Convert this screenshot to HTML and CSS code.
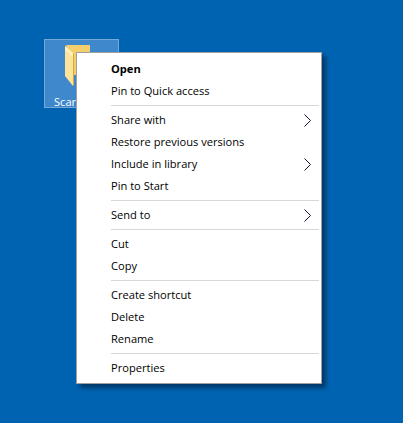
FILE: index.html
```html
<!DOCTYPE html>
<html>
<head>
    <title>Desktop</title>
    <meta charset="utf-8">
    <link rel="stylesheet" href="styles.css">
</head>
<body>
    <div class="desktop">
        <div class="icon">
            <svg class="folder" width="26" height="41" viewBox="0 0 26 41">
                <path d="M1 0H25V30H9Z" fill="#f3cf6e"/>
                <path d="M0 1L8 8V41L0 31Z" fill="#fbe39c"/>
                <path d="M0 1L8 8V12L0 5Z" fill="#fff0bd"/>
                <path d="M8 8L9 9V40L8 41Z" fill="#d9a93f"/>
            </svg>
            <span class="label">Scarlet</span>
        </div>
        <div class="menu">
            <div class="item bold">Open</div>
            <div class="item">Pin to Quick access</div>
            <div class="sep"></div>
            <div class="item">Share with
                <svg class="arrow" width="8" height="13" viewBox="0 0 8 13"><path d="M.5 .5L6.5 6.5L.5 12.5" fill="none" stroke="#1c0f3c"/></svg>
            </div>
            <div class="item">Restore previous versions</div>
            <div class="item">Include in library
                <svg class="arrow" width="8" height="13" viewBox="0 0 8 13"><path d="M.5 .5L6.5 6.5L.5 12.5" fill="none" stroke="#1c0f3c"/></svg>
            </div>
            <div class="item">Pin to Start</div>
            <div class="sep"></div>
            <div class="item">Send to
                <svg class="arrow" width="8" height="13" viewBox="0 0 8 13"><path d="M.5 .5L6.5 6.5L.5 12.5" fill="none" stroke="#1c0f3c"/></svg>
            </div>
            <div class="sep"></div>
            <div class="item">Cut</div>
            <div class="item">Copy</div>
            <div class="sep"></div>
            <div class="item">Create shortcut</div>
            <div class="item">Delete</div>
            <div class="item">Rename</div>
            <div class="sep"></div>
            <div class="item">Properties</div>
        </div>
    </div>
</body>
</html>
```

FILE: styles.css
```css
*{margin: 0;padding: 0;box-sizing: border-box;}
html,body{height: 100%;}
body{font-family: "Open Sans","Noto Sans","Liberation Sans",sans-serif;font-size: 11.1px;overflow: hidden;}
.desktop{position: relative;width: 100%;height: 100%;padding: 39px 0 0 44px;background: #0063b1;}
.icon{display: flex;flex-direction: column;width: 75px;height: 69px;padding: 5px 0 0 20px;background: #3f88cb;border: 1px solid #74a8d8;}
.folder{flex: none;}
.label{margin: 8px 0 0 -11px;color: #fff;line-height: 15px;}
.menu{position: absolute;left: 76px;top: 52px;width: 246px;height: 332px;padding: 5px 2px 4px 2px;background: #fff;border: 1px solid #a0a0a0;box-shadow: 4px 4px 4px rgba(0,30,60,.6);color: #000;}
.item{display: flex;align-items: center;justify-content: space-between;height: 22px;padding: 0 7px 0 32px;line-height: 22px;}
.bold{font-weight: bold;}
.sep{height: 1px;margin: 3px 0 3px 32px;background: #d7d7d7;}
.arrow{flex: none;}
```
